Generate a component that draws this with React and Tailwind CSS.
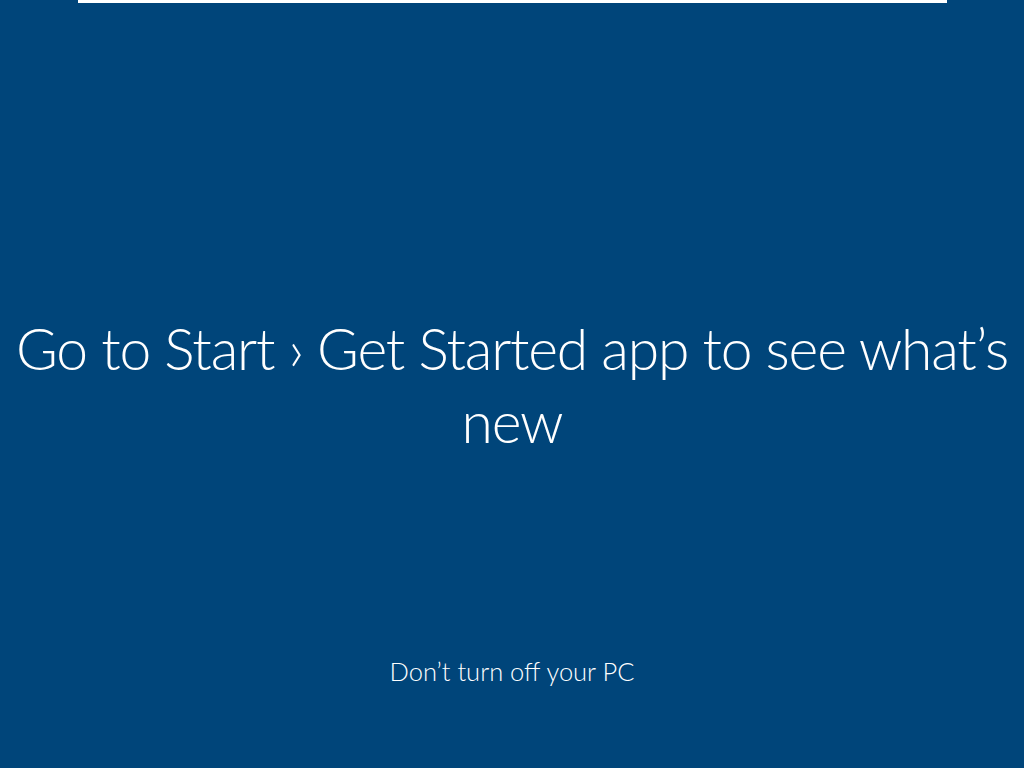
export default function App() {
  return (
    <div className="relative flex h-[768px] w-[1024px] flex-col items-center overflow-hidden bg-[#00457a] text-white" style={{ fontFamily: 'Lato, "Open Sans", sans-serif' }}>
      <div className="h-[3px] w-[869px] bg-white" />
      <div className="flex flex-1 flex-col items-center">
        <h1 className="mt-[309px] w-[1010px] text-center text-[57px] font-light leading-[73px] tracking-[-1.2px]">
          Go to Start › Get Started app to see what’s new
        </h1>
        <p className="mt-[197px] text-[25.5px] font-light leading-[32px]">Don’t turn off your PC</p>
      </div>
    </div>
  )
}
